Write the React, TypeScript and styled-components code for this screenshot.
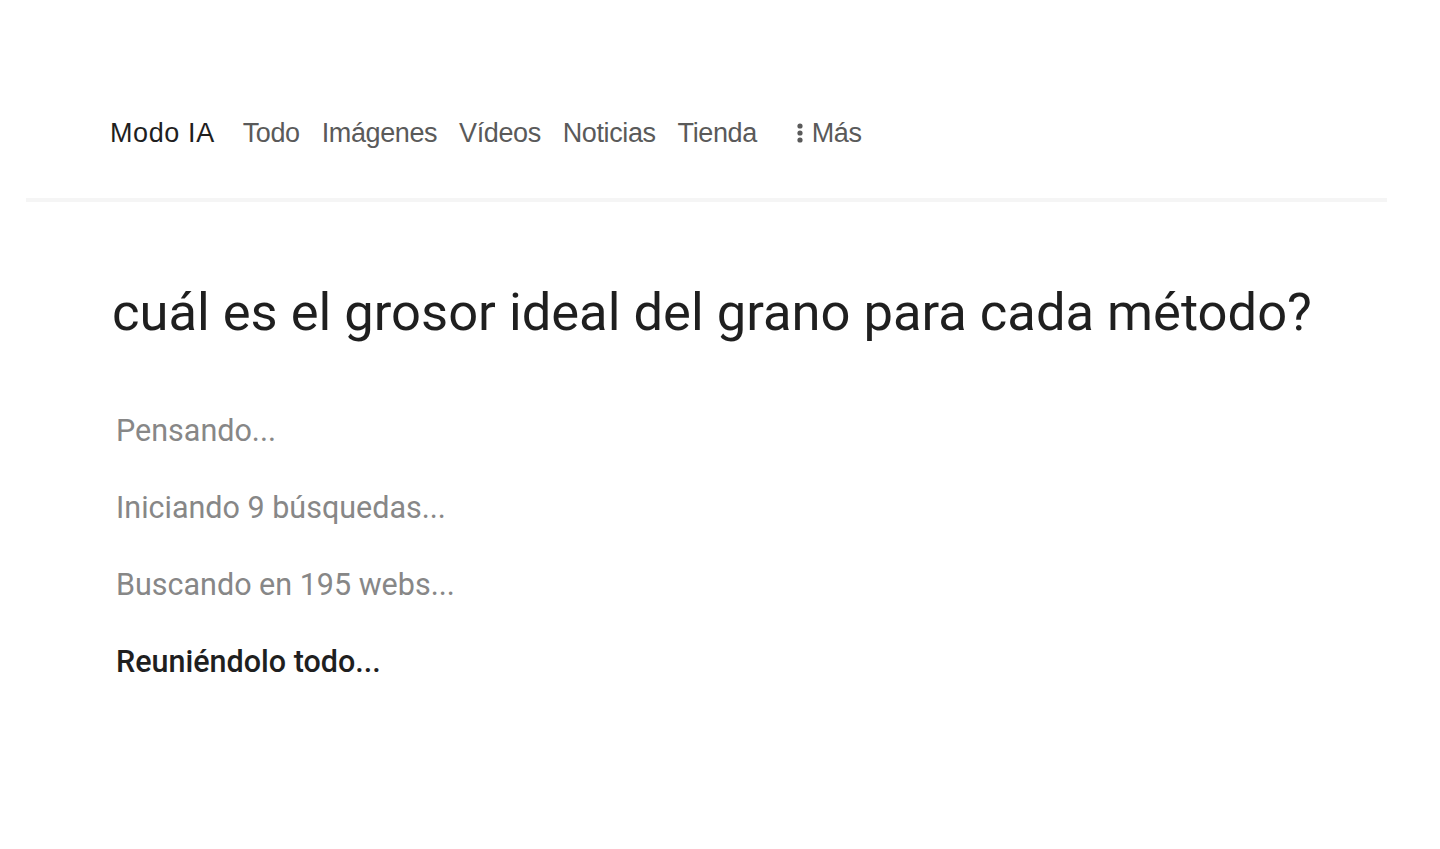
import { createGlobalStyle } from "styled-components";
import styled from "styled-components";

const GlobalStyle = createGlobalStyle`
  html, body {
    margin: 0;
    padding: 0;
    background: #ffffff;
  }
`;

const Page = styled.div`
  width: 1440px;
  height: 849px;
  background: #fff;
  overflow: hidden;
`;

const Header = styled.div`
  padding: 0 53px 0 26px;
`;

const Tabs = styled.nav`
  display: flex;
  align-items: center;
  height: 68px;
  margin-top: 99px;
  padding-left: 84px;
`;

const Tab = styled.span<{ $active?: boolean }>`
  font-family: "Liberation Sans", Arial, sans-serif;
  font-size: 27px;
  letter-spacing: ${(p) => (p.$active ? "0.6px" : "-0.4px")};
  color: ${(p) => (p.$active ? "#1f1f1f" : "#5a5a5a")};
  margin-right: ${(p) => (p.$active ? 28 : 22)}px;
  display: inline-flex;
  align-items: center;
  gap: 9px;
`;

const MoreTab = styled(Tab)`
  margin-left: 18px;
`;

const Divider = styled.div`
  height: 4px;
  margin-top: 31px;
  background: #f5f5f5;
`;

const Content = styled.main`
  padding: 80px 0 0 112px;
`;

const Question = styled.h1`
  margin: 0;
  font-family: "Roboto", "Liberation Sans", sans-serif;
  font-weight: 400;
  font-size: 52.5px;
  line-height: 60px;
  color: #1f1f1f;
`;

const Steps = styled.div`
  display: flex;
  flex-direction: column;
  gap: 45px;
  margin-top: 73px;
  padding-left: 4px;
`;

const Step = styled.div<{ $current?: boolean }>`
  font-family: "Roboto", "Liberation Sans", sans-serif;
  font-size: 30.5px;
  line-height: 32px;
  font-weight: ${(p) => (p.$current ? 500 : 400)};
  color: ${(p) => (p.$current ? "#1f1f1f" : "#878787")};
`;

const Dots = () => (
  <svg width="6" height="22" viewBox="0 0 6 22" fill="#5a5a5a">
    <circle cx="3" cy="4" r="2.6" />
    <circle cx="3" cy="11" r="2.6" />
    <circle cx="3" cy="18" r="2.6" />
  </svg>
);

const tabs = ["Todo", "Imágenes", "Vídeos", "Noticias", "Tienda"];

const steps = [
  "Pensando...",
  "Iniciando 9 búsquedas...",
  "Buscando en 195 webs...",
];

export default function App() {
  return (
    <Page>
      <GlobalStyle />
      <Header>
        <Tabs>
          <Tab $active>Modo IA</Tab>
          {tabs.map((t) => (
            <Tab key={t}>{t}</Tab>
          ))}
          <MoreTab>
            <Dots />
            Más
          </MoreTab>
        </Tabs>
        <Divider />
      </Header>
      <Content>
        <Question>cuál es el grosor ideal del grano para cada método?</Question>
        <Steps>
          {steps.map((s) => (
            <Step key={s}>{s}</Step>
          ))}
          <Step $current>Reuniéndolo todo...</Step>
        </Steps>
      </Content>
    </Page>
  );
}
